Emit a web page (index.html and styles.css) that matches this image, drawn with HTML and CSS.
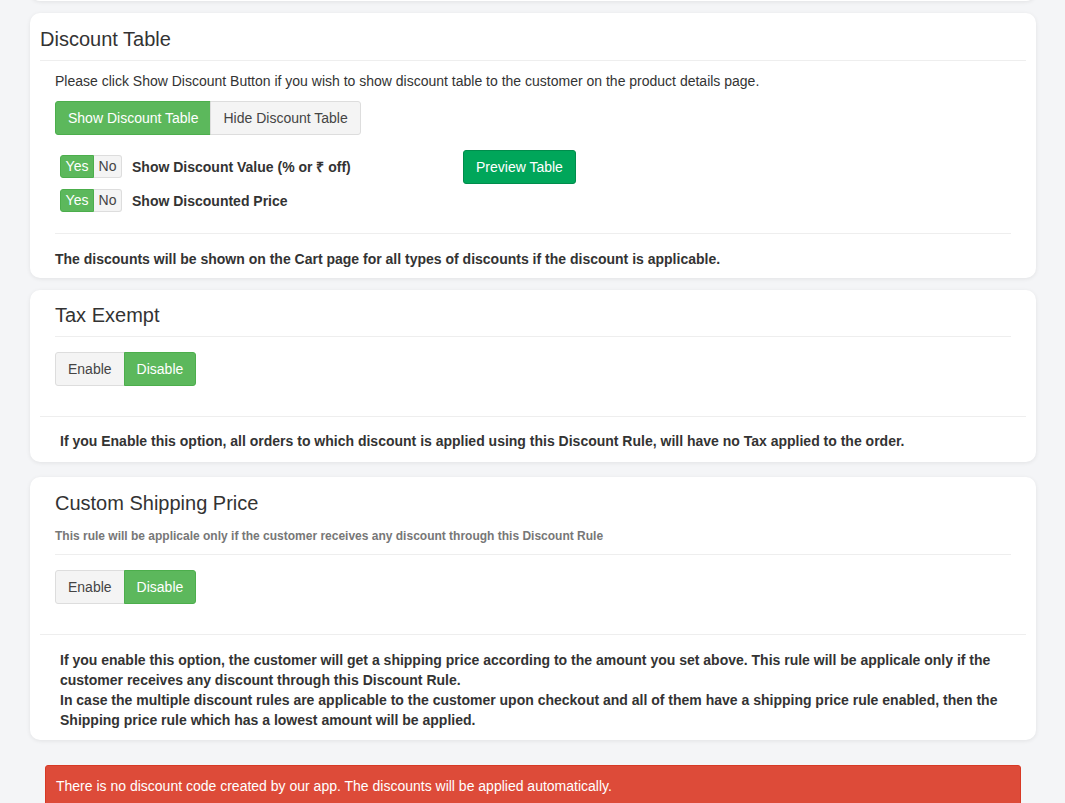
FILE: index.html
```html
<!DOCTYPE html>
<html>
<head>
<meta charset="utf-8">
<link rel="stylesheet" href="styles.css">
</head>
<body>
<div class="page">
  <div class="card card-stub"></div>

  <div class="card card-discount">
    <div class="card-header"><h3 class="title">Discount Table</h3></div>
    <div class="card-body">
      <p class="intro">Please click Show Discount Button if you wish to show discount table to the customer on the product details page.</p>
      <div class="btn-group">
        <button class="btn btn-green">Show Discount Table</button>
        <button class="btn btn-default">Hide Discount Table</button>
      </div>
      <div class="options">
        <div class="toggles">
          <div class="toggle-row">
            <div class="toggle"><span class="t-yes">Yes</span><span class="t-no">No</span></div>
            <span class="toggle-label">Show Discount Value (% or ₹ off)</span>
          </div>
          <div class="toggle-row">
            <div class="toggle"><span class="t-yes">Yes</span><span class="t-no">No</span></div>
            <span class="toggle-label">Show Discounted Price</span>
          </div>
        </div>
        <div class="preview-col">
          <button class="btn btn-success">Preview Table</button>
        </div>
      </div>
      <div class="note-sep"></div>
      <p class="note">The discounts will be shown on the Cart page for all types of discounts if the discount is applicable.</p>
    </div>
  </div>

  <div class="card card-tax">
    <div class="section">
      <h3 class="title">Tax Exempt</h3>
      <div class="btn-group">
        <button class="btn btn-default">Enable</button>
        <button class="btn btn-green">Disable</button>
      </div>
    </div>
    <div class="card-footer">
      <p class="note">If you Enable this option, all orders to which discount is applied using this Discount Rule, will have no Tax applied to the order.</p>
    </div>
  </div>

  <div class="card card-ship">
    <div class="section">
      <h3 class="title">Custom Shipping Price</h3>
      <p class="subtitle">This rule will be applicale only if the customer receives any discount through this Discount Rule</p>
      <div class="btn-group">
        <button class="btn btn-default">Enable</button>
        <button class="btn btn-green">Disable</button>
      </div>
    </div>
    <div class="card-footer">
      <p class="note">If you enable this option, the customer will get a shipping price according to the amount you set above. This rule will be applicale only if the customer receives any discount through this Discount Rule.<br>In case the multiple discount rules are applicable to the customer upon checkout and all of them have a shipping price rule enabled, then the Shipping price rule which has a lowest amount will be applied.</p>
    </div>
  </div>

  <div class="alert">There is no discount code created by our app. The discounts will be applied automatically.</div>
</div>
</body>
</html>
```

FILE: styles.css
```css
html, body {
  margin: 0;
  padding: 0;
}
body {
  background: #f4f5f7;
  font-family: "Liberation Sans", Arial, sans-serif;
  font-size: 14px;
  line-height: 20px;
  color: #333;
  overflow: hidden;
}
.page {
  padding: 0 29px 40px 30px;
}
.card {
  background: #fff;
  border-radius: 10px;
  box-shadow: 0 1px 4px rgba(0, 0, 0, 0.08);
  padding: 10px;
}
.card-stub {
  padding: 0;
  margin-top: -30px;
  height: 31px;
  margin-bottom: 12px;
}
.title {
  margin: 0;
  font-size: 20px;
  line-height: 22px;
  font-weight: normal;
  color: #333;
}
.card-header {
  padding: 5px 0 10px;
  border-bottom: 1px solid #eee;
}
.card-body {
  padding: 0 15px;
}
p {
  margin: 0;
}
.intro {
  margin-top: 10px;
}
.btn-group {
  display: flex;
  margin-top: 10px;
}
.btn {
  font-family: inherit;
  font-size: 14px;
  line-height: 20px;
  padding: 6px 12px;
  border: 1px solid transparent;
  border-radius: 3px;
  cursor: pointer;
  margin: 0;
}
.btn-group .btn:first-child {
  border-top-right-radius: 0;
  border-bottom-right-radius: 0;
}
.btn-group .btn:last-child {
  border-top-left-radius: 0;
  border-bottom-left-radius: 0;
  margin-left: -1px;
}
.btn-green {
  background: #5cb85c;
  border-color: #4cae4c;
  color: #fff;
}
.btn-default {
  background: #f4f4f4;
  border-color: #ddd;
  color: #444;
}
.btn-success {
  background: #00a65a;
  border-color: #008d4c;
  color: #fff;
}
.options {
  display: flex;
  margin-top: 15px;
}
.toggles {
  width: 408px;
  padding-top: 5px;
  display: flex;
  flex-direction: column;
  gap: 11px;
}
.toggle-row {
  display: flex;
  align-items: center;
  padding-left: 5px;
  height: 23px;
}
.toggle {
  display: flex;
  height: 23px;
}
.toggle span {
  box-sizing: border-box;
  height: 23px;
  line-height: 21px;
  font-size: 14px;
  text-align: center;
  border: 1px solid;
}
.t-yes {
  width: 34px;
  background: #5cb85c;
  border-color: #4cae4c !important;
  color: #fff;
  border-radius: 3px 0 0 3px;
}
.t-no {
  width: 28px;
  background: #f4f4f4;
  border-color: #ddd !important;
  border-left: none !important;
  color: #444;
  border-radius: 0 3px 3px 0;
}
.toggle-label {
  font-weight: bold;
  margin-left: 10px;
}
.note-sep {
  border-top: 1px solid #eee;
  margin-top: 21px;
}
.note {
  font-weight: bold;
  margin-top: 15px;
}
.card-discount .note {
  margin-bottom: -1px;
}
.card-tax {
  margin-top: 12px;
}
.card-ship {
  margin-top: 15px;
}
.section {
  padding: 4px 15px 30px;
}
.card-ship .section {
  padding-top: 5px;
}
.section .title {
  padding-bottom: 10px;
  border-bottom: 1px solid #eee;
}
.card-ship .section .title {
  border-bottom: none;
  padding-bottom: 0;
}
.subtitle {
  font-size: 12px;
  font-weight: bold;
  color: #777;
  line-height: 17px;
  margin-top: 14px;
  padding-bottom: 9px;
  border-bottom: 1px solid #eee;
}
.section .btn-group {
  margin-top: 15px;
}
.card-footer {
  border-top: 1px solid #eee;
  padding: 14px 20px 1px;
}
.card-footer .note {
  margin-top: 0;
}
.card-ship .card-footer {
  padding-top: 15px;
  padding-bottom: 0;
}
.alert {
  margin: 25px 15px 0;
  background: #dd4b39;
  border: 1px solid #d73925;
  border-radius: 3px;
  color: #fff;
  padding: 10px 10px 12px;
  line-height: 20px;
  height: 40px;
}
```
